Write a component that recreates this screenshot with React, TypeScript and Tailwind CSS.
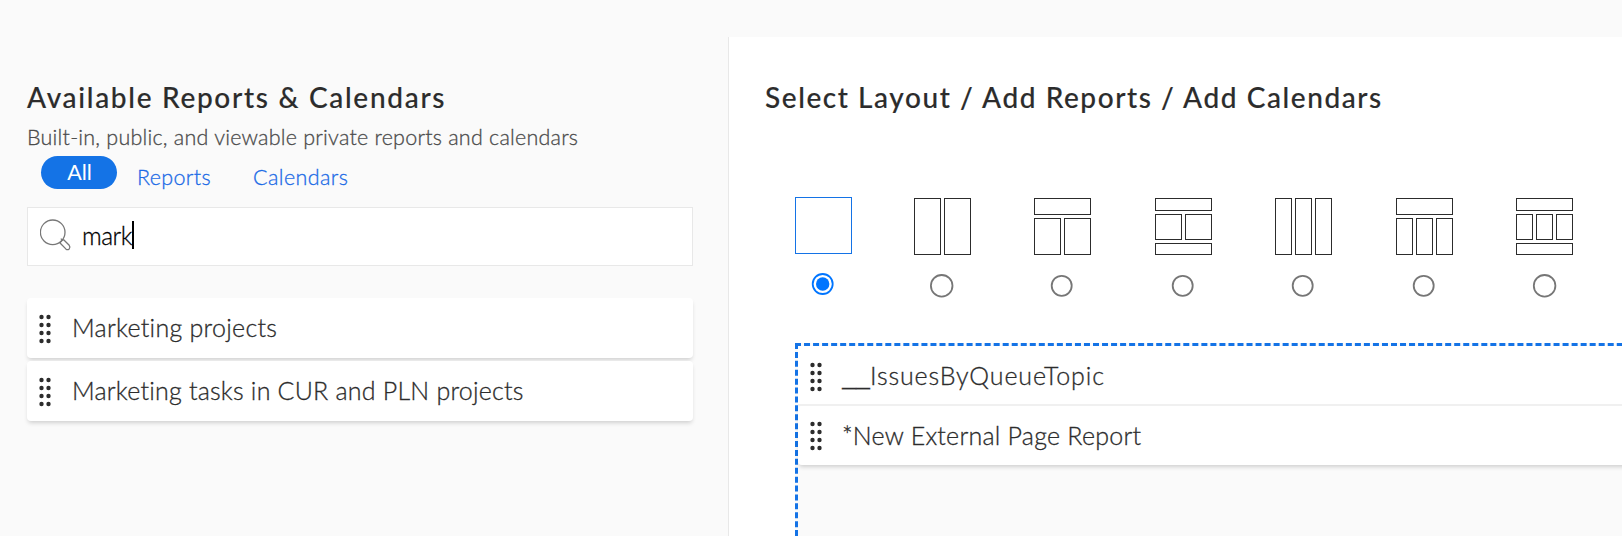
import { useState } from "react";

type Layout = { x: number; y: number; w: number; h: number }[];

const layouts: Layout[] = [
  [{ x: 0, y: 0, w: 57, h: 57 }],
  [{ x: 0, y: 0, w: 27, h: 57 }, { x: 30, y: 0, w: 27, h: 57 }],
  [{ x: 0, y: 0, w: 57, h: 17 }, { x: 0, y: 20, w: 27, h: 37 }, { x: 30, y: 20, w: 27, h: 37 }],
  [{ x: 0, y: 0, w: 57, h: 13 }, { x: 0, y: 16, w: 27, h: 26 }, { x: 30, y: 16, w: 27, h: 26 }, { x: 0, y: 45, w: 57, h: 12 }],
  [{ x: 0, y: 0, w: 17, h: 57 }, { x: 20, y: 0, w: 17, h: 57 }, { x: 40, y: 0, w: 17, h: 57 }],
  [{ x: 0, y: 0, w: 57, h: 17 }, { x: 0, y: 20, w: 17, h: 37 }, { x: 20, y: 20, w: 17, h: 37 }, { x: 40, y: 20, w: 17, h: 37 }],
  [{ x: 0, y: 0, w: 57, h: 13 }, { x: 0, y: 16, w: 17, h: 26 }, { x: 20, y: 16, w: 17, h: 26 }, { x: 40, y: 16, w: 17, h: 26 }, { x: 0, y: 45, w: 57, h: 12 }],
];

const offsets = ["", "ml-[62px]", "ml-[63px]", "ml-[64px]", "ml-[63px]", "ml-[64px]", "ml-[63px]"];

const available = [
  { name: "Marketing projects", tracking: "tracking-[0.28px]" },
  { name: "Marketing tasks in CUR and PLN projects", tracking: "tracking-[0.22px]" },
];

const added = [
  { prefix: "__", name: "IssuesByQueueTopic", tracking: "tracking-[0.9px]" },
  { prefix: "", name: "*New External Page Report", tracking: "tracking-[0.24px]" },
];

function LayoutOption({ index, active, onSelect }: { index: number; active: boolean; onSelect: () => void }) {
  const large = index === 1 || index === 6;
  return (
    <button
      type="button"
      aria-pressed={active}
      onClick={onSelect}
      className={`flex w-[57px] shrink-0 flex-col ${offsets[index]} ${index === 0 ? "" : "pt-px"}`}
    >
      <svg width="57" height="57" className="block" fill="none" stroke={active ? "#1473e6" : "#2c2c2c"}>
        {layouts[index].map((r, i) => (
          <rect key={i} x={r.x + 0.5} y={r.y + 0.5} width={r.w - 1} height={r.h - 1} />
        ))}
      </svg>
      <svg width="57" height="26" className={active ? "mt-[17px] block" : "mt-[18px] block"}>
        <circle
          cx={index === 6 ? 28.6 : 27.7}
          cy={active ? 13 : 12.8}
          r={large ? 10.8 : 10}
          fill="none"
          stroke={active ? "#0075ff" : "#767676"}
          strokeWidth="1.8"
        />
        {active && <circle cx="27.7" cy="13" r="6.7" fill="#0075ff" />}
      </svg>
    </button>
  );
}

function Grip() {
  return (
    <svg width="14" height="30" className="shrink-0" fill="#2c2c2c">
      {[3, 11, 19, 27].map((y) => (
        <g key={y}>
          <circle cx="3.5" cy={y} r="2.2" />
          <circle cx="10.5" cy={y} r="2.2" />
        </g>
      ))}
    </svg>
  );
}

export default function App() {
  const [selected, setSelected] = useState(0);
  return (
    <div className="flex h-[536px] w-full overflow-hidden bg-[#fafafa] font-['Lato',sans-serif] text-[#2c2c2c] [font-variant-ligatures:none]">
      <section className="w-[728px] shrink-0 pl-[27px] pt-[81px]">
        <h2 className="text-[28px] leading-8 font-medium whitespace-nowrap tracking-[1.7px] [-webkit-text-stroke:0.15px_#2c2c2c]">Available Reports &amp; Calendars</h2>
        <p className="mt-[10px] text-[21.5px] leading-7 font-light tracking-[0.22px] whitespace-nowrap text-[#4b4b4b] [-webkit-text-stroke:0.3px_#4b4b4b]">
          Built-in, public, and viewable private reports and calendars
        </p>
        <nav className="mt-[5px] flex h-[51px] items-start pl-[14px] text-[21.5px] leading-7">
          <span className="flex h-[33px] w-[76px] justify-center rounded-full bg-[#1473e6] pt-[2px] pl-px text-white">All</span>
          <span className="ml-[20px] pt-[7px] font-light tracking-[0.35px] text-[#1b6ae6] [-webkit-text-stroke:0.3px_#1b6ae6]">Reports</span>
          <span className="ml-[42px] pt-[7px] font-light tracking-[0.4px] text-[#1b6ae6] [-webkit-text-stroke:0.3px_#1b6ae6]">Calendars</span>
        </nav>
        <div className="flex h-[59px] w-[666px] items-center border border-[#e8e8e8] bg-white pl-[12px]">
          <svg width="34" height="34" viewBox="0 0 34 34" fill="none" stroke="#777" strokeWidth="1.3" className="mb-px">
            <circle cx="12.7" cy="13.3" r="12.3" />
            <path d="M22.2 21.3 L20.3 23.2 Q19.8 23.7 20.3 24.3 L25.8 29.9 Q27.5 31.4 29.2 29.9 Q30.7 28.1 29.2 26.3 L23.7 20.7 Z M20.8 19.6 L22.6 21.4" />
          </svg>
          <span className="mb-[2px] ml-[8px] text-[24.5px] leading-8 font-light tracking-[-0.5px] text-black [-webkit-text-stroke:0.3px_#000]">mark</span>
          <span className="mb-[3px] h-[28px] w-[2px] bg-black" />
        </div>
        <ul className="mt-[32px] flex w-[666px] flex-col gap-[3px]">
          {available.map((t) => (
            <li key={t.name} className="flex h-[60px] items-center rounded-[4px] bg-white pt-px pl-[11px] shadow-[0_3px_4px_-1px_rgba(0,0,0,0.17)]">
              <Grip />
              <span className={`mb-[3px] ml-[20px] text-[25px] leading-8 font-light whitespace-nowrap [-webkit-text-stroke:0.3px_#2c2c2c] ${t.tracking}`}>{t.name}</span>
            </li>
          ))}
        </ul>
      </section>
      <main className="mt-[37px] h-[499px] min-w-0 flex-1 border-l border-[#e8e8e8] bg-white pt-[44px]">
        <h2 className="pl-[36px] text-[28px] leading-8 font-medium whitespace-nowrap tracking-[1.57px] [-webkit-text-stroke:0.15px_#2c2c2c]">
          Select Layout / Add Reports / Add Calendars
        </h2>
        <div className="mt-[84px] flex h-[146px] items-start pl-[66px]">
          {layouts.map((_, i) => (
            <LayoutOption key={i} index={i} active={selected === i} onSelect={() => setSelected(i)} />
          ))}
        </div>
        <div className="ml-[66px] h-[300px] w-[900px] border-[3px] border-dashed border-[#1473e6] bg-[#fafafa]">
          <ul className="flex flex-col">
            {added.map((t, i) => (
              <li
                key={t.name}
                className={
                  i === 0
                    ? "flex h-[60px] items-center border-b-2 border-[#f0f0f0] bg-white pt-[3px] pl-[11px]"
                    : "flex h-[59px] items-center rounded-[4px] bg-white pt-px pl-[11px] shadow-[0_3px_4px_-1px_rgba(0,0,0,0.17)]"
                }
              >
                <Grip />
                <span className={`${i === 0 ? "mb-[7px]" : "mb-[2px]"} ml-[19px] text-[25px] leading-8 font-light whitespace-nowrap [-webkit-text-stroke:0.3px_#2c2c2c] ${t.tracking}`}>
                  {t.prefix && <span className="font-['Open_Sans',sans-serif] text-[34px] leading-none tracking-normal">{t.prefix}</span>}
                  {t.name}
                </span>
              </li>
            ))}
          </ul>
        </div>
      </main>
    </div>
  );
}
